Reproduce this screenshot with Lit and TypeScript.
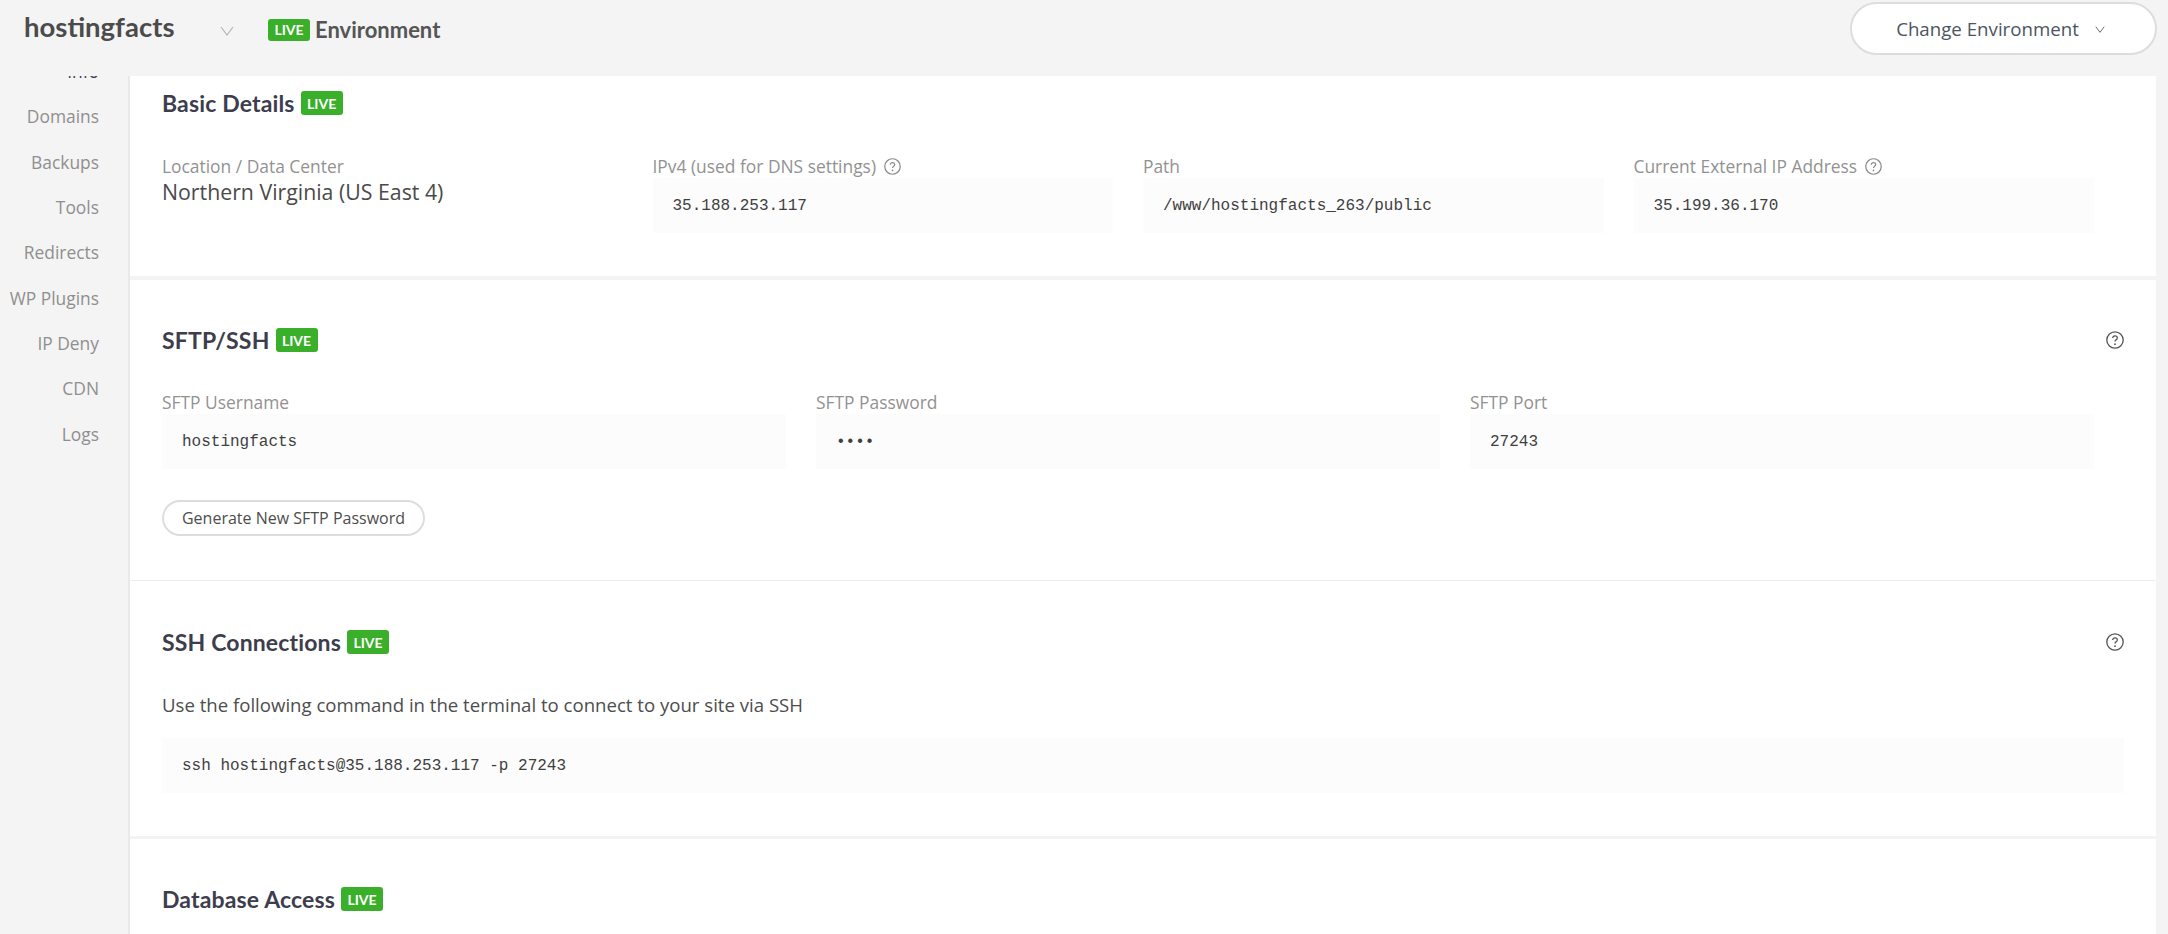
import { LitElement, html, css, svg } from "lit";
import { customElement } from "lit/decorators.js";

const help = html`<svg class="help" viewBox="0 0 18 18" fill="none" stroke="currentColor">
  <circle cx="9" cy="9" r="8.2" stroke-width="1.3"></circle>
  <path d="M6.7 7.1c0-1.3 1-2.2 2.3-2.2s2.3.9 2.3 2.1c0 1.8-2.3 1.9-2.3 3.6" stroke-width="1.3"></path>
  <circle cx="9" cy="13.2" r=".9" fill="currentColor" stroke="none"></circle>
</svg>`;

const chevron = (cls: string) => html`<svg class=${cls} viewBox="0 0 14 10" fill="none" stroke="currentColor" stroke-width="1.2">${svg`<path d="M1 1l6 8 6-8"></path>`}</svg>`;

const live = html`<span class="live">LIVE</span>`;

@customElement("app-root")
export class AppRoot extends LitElement {
  static styles = css`
    :host { display: block; height: 934px; overflow: hidden; background: #f4f4f4; font-family: "Open Sans", sans-serif; color: #4a4a4a; }
    .top { height: 76px; display: flex; align-items: flex-start; padding: 0 11px 0 24px; box-sizing: border-box; }
    .brand { font-family: Lato, sans-serif; font-size: 27.5px; font-weight: 700; line-height: 32px; margin-top: 11px; width: 196px; color: #4b4b4b; }
    .brand-chev { width: 14px; height: 10px; margin-top: 26px; color: #b4b4b4; }
    .env { display: flex; align-items: center; margin-left: 34px; margin-top: 18px; gap: 5px; font-family: Lato, sans-serif; font-size: 22px; font-weight: 700; line-height: 23px; color: #555; flex: 1; }
    .env .live { width: 42px; height: 22px; }
    .change { margin-top: 2px; width: 307px; height: 53px; box-sizing: border-box; border: 2px solid #ddd; border-radius: 27px; background: #fff; display: flex; align-items: center; justify-content: center; gap: 15px; font-size: 18.7px; color: #4d5560; padding-right: 5px; }
    .change svg { width: 12px; height: 7px; margin-top: 2px; }
    .layout { display: flex; height: 858px; }
    .side { width: 128px; box-sizing: border-box; overflow: hidden; flex: none; }
    .side ul { list-style: none; margin: -27px 0 0; padding: 0 29px 0 0; text-align: right; font-size: 17.4px; color: #8f8f8f; }
    .side li { height: 45.33px; line-height: 45.33px; white-space: nowrap; }
    .side li.on { color: #3d3d4d; }
    .main { position: relative; width: 2028px; background: #fff; border-left: 2px solid #e9e9e9; box-sizing: border-box; flex: none; overflow: hidden; }
    .marker { position: absolute; left: -2px; top: 0; width: 2px; height: 20px; background: #444; }
    section { padding: 0 32px; box-sizing: border-box; }
    .basic { height: 204px; border-bottom: 4px solid #f3f3f5; padding-top: 15px; }
    .sftp { height: 301px; border-bottom: 1px solid #eee; padding-top: 48px; }
    .ssh { height: 258px; border-bottom: 3px solid #f3f3f3; padding-top: 49px; }
    .db { padding-top: 48px; }
    .head { display: flex; align-items: center; height: 24px; gap: 6px; font-family: Lato, sans-serif; font-weight: 700; font-size: 23px; letter-spacing: 0.15px; color: #3d3d4d; }
    .head .help { margin-left: auto; color: #555; width: 18px; height: 18px; }
    .live { display: inline-flex; align-items: center; justify-content: center; width: 42px; height: 24px; border-radius: 3px; background: #3aaf2a; color: #fff; font-family: Lato, sans-serif; font-size: 14px; font-weight: 700; letter-spacing: 0; flex: none; }
    .cols { display: grid; gap: 30px; margin-right: 30px; }
    .four { grid-template-columns: repeat(4, 1fr); margin-top: 39px; }
    .three { grid-template-columns: repeat(3, 1fr); margin-top: 38px; }
    label { display: flex; align-items: center; gap: 8px; height: 24px; font-size: 17.4px; color: #929292; white-space: nowrap; }
    label .help { width: 17px; height: 17px; color: #8a8a8a; }
    .box { height: 55px; background: #fcfcfc; padding-left: 20px; display: flex; align-items: center; font-family: "Liberation Mono", monospace; font-size: 16px; color: #3f3f3f; white-space: pre; box-sizing: border-box; }
    .val { font-size: 21.3px; line-height: 28px; color: #4a4a4a; }
    .btn { margin-top: 31px; width: 263px; height: 36px; box-sizing: border-box; border: 2px solid #ddd; border-radius: 18px; display: flex; align-items: center; justify-content: center; font-size: 16px; color: #4d4d4d; background: #fff; }
    p { margin: 37px 0 0; font-size: 18.6px; line-height: 28px; color: #4d4d4d; }
    .wide { margin: 19px 0 0; }
  `;

  private side = ["Info", "Domains", "Backups", "Tools", "Redirects", "WP Plugins", "IP Deny", "CDN", "Logs"];

  render() {
    return html`
      <div class="top">
        <div class="brand">hostingfacts</div>
        ${chevron("brand-chev")}
        <div class="env">${live}<span>Environment</span></div>
        <div class="change"><span>Change Environment</span>${chevron("")}</div>
      </div>
      <div class="layout">
        <nav class="side"><ul>${this.side.map((s, i) => html`<li class=${i === 0 ? "on" : ""}>${s}</li>`)}</ul></nav>
        <div class="main">
          <div class="marker"></div>
          <section class="basic">
            <div class="head">Basic Details ${live}</div>
            <div class="cols four">
              <div><label>Location / Data Center</label><div class="val">Northern Virginia (US East 4)</div></div>
              <div><label>IPv4 (used for DNS settings) ${help}</label><div class="box">35.188.253.117</div></div>
              <div><label>Path</label><div class="box">/www/hostingfacts_263/public</div></div>
              <div><label>Current External IP Address ${help}</label><div class="box">35.199.36.170</div></div>
            </div>
          </section>
          <section class="sftp">
            <div class="head">SFTP/SSH ${live} ${help}</div>
            <div class="cols three">
              <div><label>SFTP Username</label><div class="box">hostingfacts</div></div>
              <div><label>SFTP Password</label><div class="box">••••</div></div>
              <div><label>SFTP Port</label><div class="box">27243</div></div>
            </div>
            <div class="btn">Generate New SFTP Password</div>
          </section>
          <section class="ssh">
            <div class="head">SSH Connections ${live} ${help}</div>
            <p>Use the following command in the terminal to connect to your site via SSH</p>
            <div class="box wide">ssh hostingfacts@35.188.253.117 -p 27243</div>
          </section>
          <section class="db">
            <div class="head">Database Access ${live}</div>
          </section>
        </div>
      </div>
    `;
  }
}
